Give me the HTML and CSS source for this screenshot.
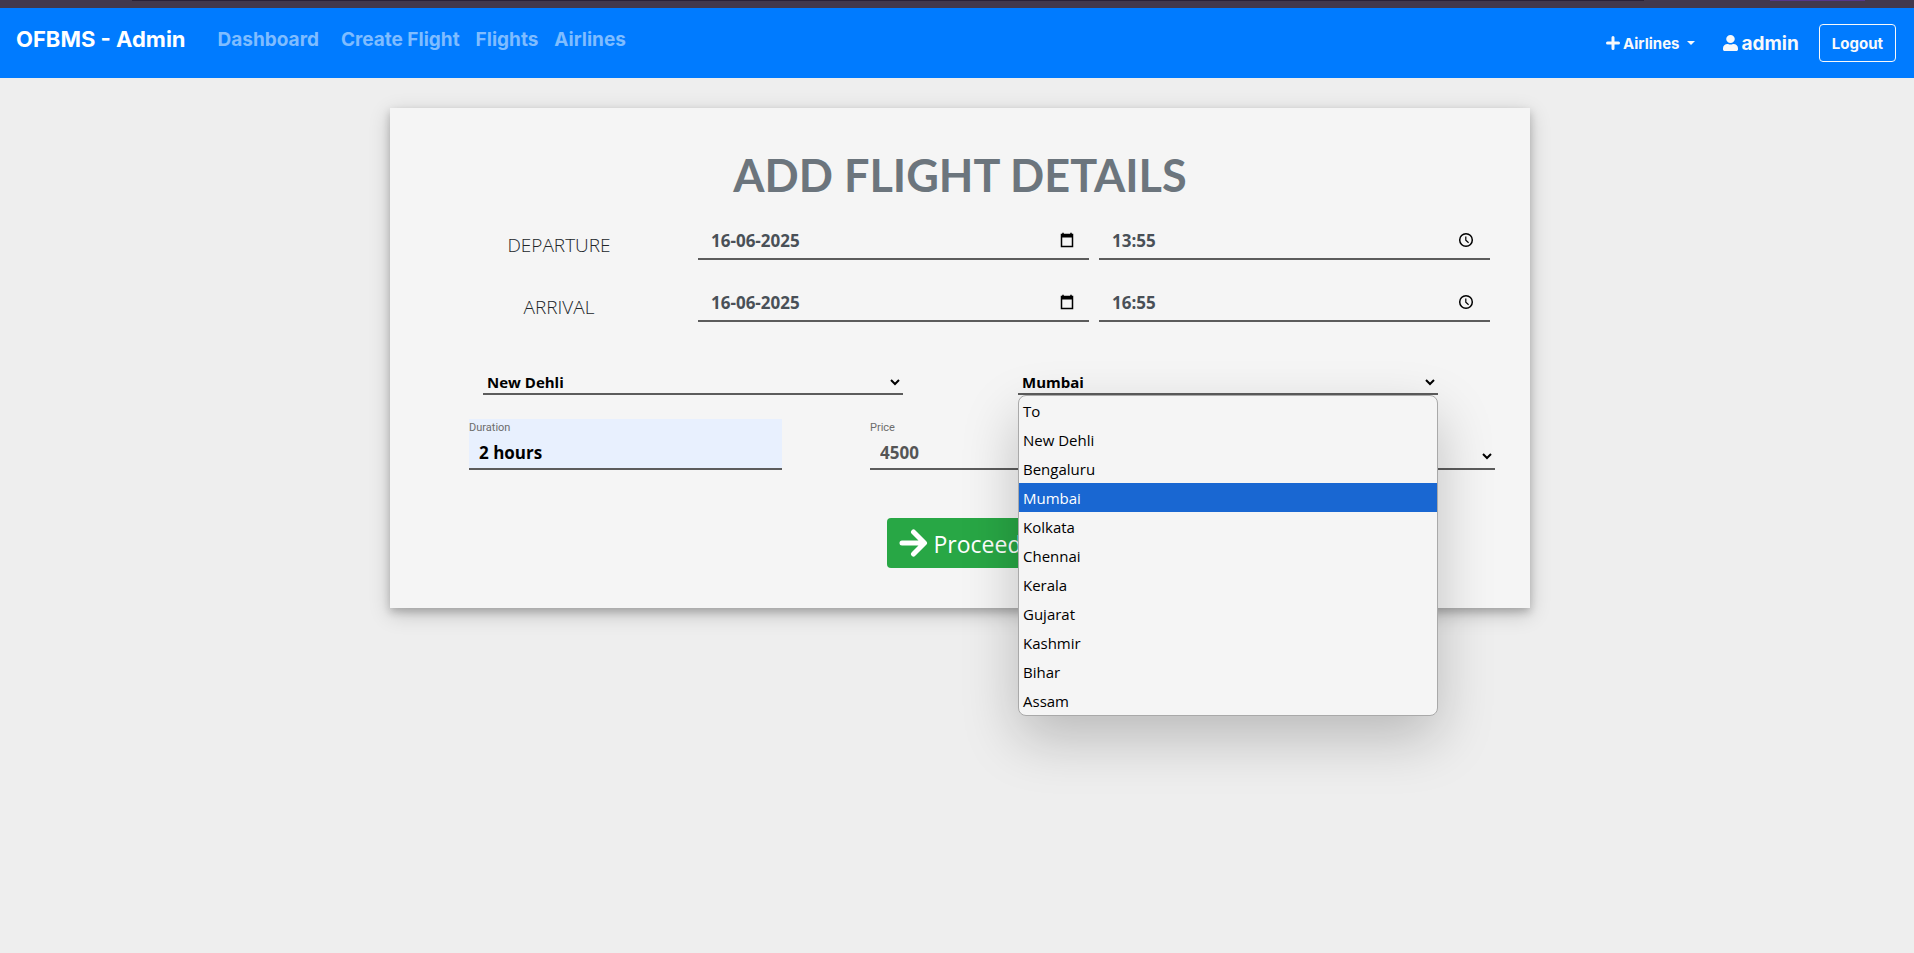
FILE: index.html
```html
<!DOCTYPE html>
<html lang="en">
<head>
<meta charset="utf-8">
<title>OFBMS - Admin</title>
<link rel="stylesheet" href="styles.css">
</head>
<body>
<div class="strip"><span class="strip-dark"></span><span class="strip-accent"></span></div>
<nav class="navbar">
  <a class="brand" href="#">OFBMS - Admin</a>
  <div class="nav-links">
    <a class="first" href="#">Dashboard</a>
    <a href="#">Create Flight</a>
    <a href="#">Flights</a>
    <a href="#">Airlines</a>
  </div>
  <div class="nav-right">
    <button class="menu-toggle" type="button">
      <svg width="14" height="14" viewBox="0 0 14 14" aria-hidden="true"><path d="M7 1.500v11M1.500 7h11" stroke="currentColor" stroke-width="3" stroke-linecap="round"/></svg>
      Airlines<span class="caret"></span>
    </button>
    <a class="user" href="#">
      <svg width="15" height="16" viewBox="0 0 448 512" preserveAspectRatio="none" aria-hidden="true"><path fill="currentColor" d="M224 256c70.700 0 128-57.300 128-128S294.700 0 224 0 96 57.300 96 128s57.300 128 128 128zm89.600 32h-16.700a174 174 0 0 1-145.800 0h-16.700C60.200 288 0 348.200 0 422.400V464c0 26.500 21.500 48 48 48h352c26.500 0 48-21.500 48-48v-41.600c0-74.200-60.200-134.400-134.400-134.400z"/></svg>
      admin
    </a>
    <button class="logout" type="button">Logout</button>
  </div>
</nav>
<main class="page">
  <form class="card">
    <h1>ADD FLIGHT DETAILS</h1>
    <div class="times">
      <label for="dep-date">DEPARTURE</label>
      <div class="picker date">
        <input id="dep-date" type="text" value="16-06-2025">
        <svg width="16" height="16" viewBox="0 0 16 16" aria-hidden="true"><path d="M4 .8V3M12 .8V3" stroke="#000" stroke-width="1.500"/><path d="M2.500 2.500h11v12h-11z" fill="none" stroke="#000" stroke-width="1.500"/><path d="M2 2h12v3.500H2z"/></svg>
      </div>
      <div class="picker">
        <input type="text" value="13:55" aria-label="Departure time">
        <svg width="16" height="16" viewBox="0 0 16 16" aria-hidden="true"><circle cx="8" cy="8" r="6.300" fill="none" stroke="#000" stroke-width="1.500"/><path d="M7.800 4.500V8.300L10.600 10.800" fill="none" stroke="#000" stroke-width="1.200"/></svg>
      </div>
      <label for="arr-date">ARRIVAL</label>
      <div class="picker date">
        <input id="arr-date" type="text" value="16-06-2025">
        <svg width="16" height="16" viewBox="0 0 16 16" aria-hidden="true"><path d="M4 .8V3M12 .8V3" stroke="#000" stroke-width="1.500"/><path d="M2.500 2.500h11v12h-11z" fill="none" stroke="#000" stroke-width="1.500"/><path d="M2 2h12v3.500H2z"/></svg>
      </div>
      <div class="picker">
        <input type="text" value="16:55" aria-label="Arrival time">
        <svg width="16" height="16" viewBox="0 0 16 16" aria-hidden="true"><circle cx="8" cy="8" r="6.300" fill="none" stroke="#000" stroke-width="1.500"/><path d="M7.800 4.500V8.300L10.600 10.800" fill="none" stroke="#000" stroke-width="1.200"/></svg>
      </div>
    </div>
    <div class="cities">
      <select aria-label="From"><option>New Dehli</option></select>
      <div class="city-to">
        <select aria-label="To"><option>Mumbai</option></select>
        <ul class="options">
          <li>To</li>
          <li>New Dehli</li>
          <li>Bengaluru</li>
          <li class="selected">Mumbai</li>
          <li>Kolkata</li>
          <li>Chennai</li>
          <li>Kerala</li>
          <li>Gujarat</li>
          <li>Kashmir</li>
          <li>Bihar</li>
          <li>Assam</li>
        </ul>
      </div>
    </div>
    <div class="details">
      <div class="field filled">
        <label for="duration">Duration</label>
        <input id="duration" type="text" value="2 hours">
      </div>
      <div class="field">
        <label for="price">Price</label>
        <input id="price" type="text" value="4500">
      </div>
      <select class="airline" aria-label="Airline"><option></option></select>
    </div>
    <button class="proceed" type="submit">
      <svg width="29" height="28" viewBox="0 0 29 28" aria-hidden="true"><path d="M3 14h22M14.500 3l11 11-11 11" fill="none" stroke="#fff" stroke-width="5" stroke-linecap="round" stroke-linejoin="round"/></svg>
      <span>Proceed</span>
    </button>
  </form>
</main>
</body>
</html>
```
FILE: styles.css
```css
* { box-sizing: border-box; }
body {
  margin: 0;
  min-height: 100vh;
  background: #eee;
  font-family: "Open Sans", "Noto Sans", sans-serif;
  font-size: 16px;
  color: #212529;
}
input, select, button { font-family: inherit; }
a { text-decoration: none; }

.strip { display: flex; height: 8px; padding: 0 49px 0 132px; justify-content: space-between; background: #42384c; }
.strip-dark { flex: 0 1 1512px; height: 1px; background: #2a2136; }
.strip-accent { flex: 0 0 95px; height: 1px; background: #56378a; }

.navbar {
  display: flex;
  align-items: flex-start;
  height: 70px;
  padding: 16px 18px 0 16px;
  background: #007bff;
  font-family: Inter, sans-serif;
  font-weight: 700;
}
.brand { font-size: 22px; line-height: 30px; color: #fff; }
.nav-links { display: flex; margin-left: 32px; gap: 16px; font-size: 19px; line-height: 32px; }
.nav-links a { color: rgba(255, 255, 255, .5); }
.nav-links .first { margin-right: 6px; }
.nav-right { display: flex; align-items: center; margin-left: auto; color: #f8f9fa; }
.menu-toggle {
  display: flex;
  align-items: center;
  gap: 3px;
  padding: 0;
  border: 0;
  background: none;
  font-size: 15px;
  font-weight: 700;
  color: inherit;
}
.caret { margin-left: 5px; border: 4px solid transparent; border-top-color: currentColor; border-bottom: 0; }
.user { display: flex; align-items: center; gap: 3px; margin: 0 20px 0 28px; font-size: 19px; color: inherit; }
.logout {
  height: 38px;
  padding: 0 12px;
  border: 1px solid #f8f9fa;
  border-radius: 4px;
  background: none;
  font-size: 15px;
  font-weight: 700;
  color: inherit;
}

.page { padding: 30px 0 0 6px; }
.card {
  max-width: 1140px;
  margin: 0 auto;
  padding: 40px 35px;
  background: #f5f5f5;
  box-shadow: 0 4px 8px rgba(0, 0, 0, .2), 0 6px 20px rgba(0, 0, 0, .19);
}
h1 {
  margin: 0 0 18px;
  font-family: Lato, sans-serif;
  font-size: 45px;
  font-weight: 700;
  line-height: 54px;
  text-align: center;
  color: #6c757d;
}

.times { display: grid; grid-template-columns: 258px 1fr 1fr; gap: 22px 10px; padding: 0 5px; }
.times label { padding-top: 10px; font-size: 19px; font-weight: 300; line-height: 30px; text-align: center; }
.picker { display: flex; align-items: center; height: 40px; padding: 2px 16px 0 13px; border-bottom: 2px solid #5c5c5c; }
.date { padding-right: 14px; }
.picker input { flex: 1; min-width: 0; padding: 0; border: 0; background: none; font-size: 17px; font-weight: 700; color: #495057; }

.cities { display: grid; grid-template-columns: 1fr 1fr; gap: 115px; margin-top: 47px; padding: 0 57px 0 58px; }
.cities select, .airline {
  width: 100%;
  height: 26px;
  padding: 2px 0 0;
  border: 0;
  border-bottom: 2px solid #5c5c5c;
  background: #f5f5f5;
  font-size: 15px;
  font-weight: 700;
  color: #000;
}
.details .airline { height: 28px; }
.city-to { position: relative; }
.options {
  position: absolute;
  z-index: 1;
  top: 100%;
  left: 0;
  right: 0;
  margin: 0;
  padding: 0;
  overflow: hidden;
  list-style: none;
  border: 1px solid #a9a9a9;
  border-radius: 8px;
  background: #f5f5f5;
  box-shadow: 0 22px 56px rgba(0, 0, 0, .22);
  font-size: 15px;
  line-height: 27px;
  color: #000;
}
.options li { padding: 2px 0 0 4px; }
.options .selected { background: #1967d2; color: #fff; }

.details { display: grid; grid-template-columns: 313fr 313fr 224fr; gap: 88px; align-items: end; margin-top: 24px; padding-left: 44px; }
.field { display: flex; flex-direction: column; height: 51px; border-bottom: 2px solid #5c5c5c; }
.field label { padding-top: 1px; font-family: Roboto, sans-serif; font-size: 11px; line-height: 16px; color: #6c6c6c; }
.field input { width: 100%; height: 32px; padding: 0 10px; border: 0; background: none; font-size: 17px; font-weight: 700; color: #555; }
.field.filled { background: #e8f0fe; }
.filled input { color: #000; }

.proceed {
  display: flex;
  align-items: center;
  gap: 6px;
  height: 50px;
  margin: 48px auto 0;
  padding: 0 12px;
  border: 0;
  border-radius: 4px;
  background: #28a745;
  font-size: 23px;
  color: #fff;
}
.proceed span { padding-top: 2px; }
```
